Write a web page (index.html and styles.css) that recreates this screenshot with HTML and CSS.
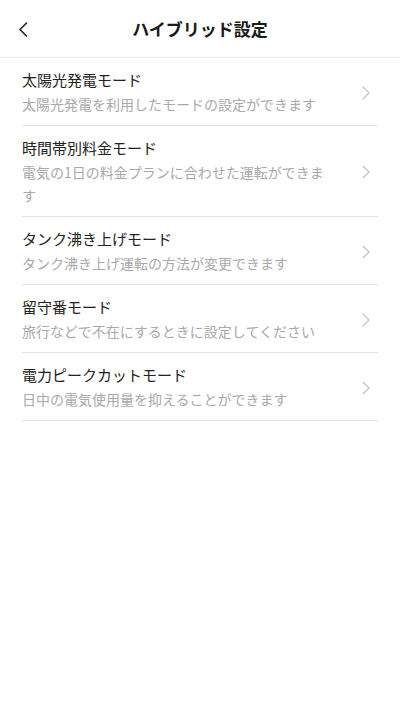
FILE: index.html
```html
<!DOCTYPE html>
<html lang="ja">
<head>
<meta charset="utf-8">
<title>ハイブリッド設定</title>
<link rel="stylesheet" href="styles.css">
</head>
<body>
<header class="header">
  <button class="back" aria-label="戻る">
    <svg width="10" height="15" viewBox="0 0 10 15"><path d="M8.5 1 L2 7.5 L8.5 14" fill="none" stroke="#222" stroke-width="1.6" stroke-linecap="round" stroke-linejoin="round"/></svg>
  </button>
  <h1 class="title">ハイブリッド設定</h1>
</header>
<ul class="list">
  <li class="item">
    <div class="text">
      <div class="item-title">太陽光発電モード</div>
      <div class="item-sub">太陽光発電を利用したモードの設定ができます</div>
    </div>
    <div class="arrow"><svg width="8" height="14" viewBox="0 0 8 14"><path d="M1 1 L7 7 L1 13" fill="none" stroke="#c4c4c4" stroke-width="1.2" stroke-linecap="round" stroke-linejoin="round"/></svg></div>
  </li>
  <li class="item">
    <div class="text">
      <div class="item-title">時間帯別料金モード</div>
      <div class="item-sub">電気の1日の料金プランに合わせた運転ができます</div>
    </div>
    <div class="arrow"><svg width="8" height="14" viewBox="0 0 8 14"><path d="M1 1 L7 7 L1 13" fill="none" stroke="#c4c4c4" stroke-width="1.2" stroke-linecap="round" stroke-linejoin="round"/></svg></div>
  </li>
  <li class="item">
    <div class="text">
      <div class="item-title">タンク沸き上げモード</div>
      <div class="item-sub">タンク沸き上げ運転の方法が変更できます</div>
    </div>
    <div class="arrow"><svg width="8" height="14" viewBox="0 0 8 14"><path d="M1 1 L7 7 L1 13" fill="none" stroke="#c4c4c4" stroke-width="1.2" stroke-linecap="round" stroke-linejoin="round"/></svg></div>
  </li>
  <li class="item">
    <div class="text">
      <div class="item-title">留守番モード</div>
      <div class="item-sub">旅行などで不在にするときに設定してください</div>
    </div>
    <div class="arrow"><svg width="8" height="14" viewBox="0 0 8 14"><path d="M1 1 L7 7 L1 13" fill="none" stroke="#c4c4c4" stroke-width="1.2" stroke-linecap="round" stroke-linejoin="round"/></svg></div>
  </li>
  <li class="item">
    <div class="text">
      <div class="item-title">電力ピークカットモード</div>
      <div class="item-sub">日中の電気使用量を抑えることができます</div>
    </div>
    <div class="arrow"><svg width="8" height="14" viewBox="0 0 8 14"><path d="M1 1 L7 7 L1 13" fill="none" stroke="#c4c4c4" stroke-width="1.2" stroke-linecap="round" stroke-linejoin="round"/></svg></div>
  </li>
</ul>
</body>
</html>
```
FILE: styles.css
```css
* { box-sizing: border-box; }
html, body {
  margin: 0;
  padding: 0;
  background: #fff;
  font-family: "Noto Sans CJK JP", "Noto Sans", sans-serif;
  color: #222;
}
.header {
  height: 58px;
  border-bottom: 1px solid #ececec;
  display: grid;
  grid-template-columns: 60px 1fr 60px;
  align-items: center;
}
.back {
  grid-column: 1;
  grid-row: 1;
  background: none;
  border: 0;
  padding: 0 0 0 18px;
  margin: 0;
  display: flex;
  align-items: center;
  height: 100%;
  justify-self: start;
}
.back svg { display: block; margin-top: 1px; }
.title {
  grid-column: 1 / 4;
  grid-row: 1;
  margin: 0;
  text-align: center;
  font-size: 17px;
  font-weight: 700;
  line-height: 24px;
  color: #1a1a1a;
}
.list {
  list-style: none;
  margin: 0;
  padding: 0 22px;
}
.item {
  display: flex;
  align-items: center;
  padding: 11px 0 9px;
  border-bottom: 1px solid #e2e2e2;
}
.text {
  flex: 1;
  min-width: 0;
}
.item-title {
  font-size: 15px;
  line-height: 22px;
  color: #222;
  margin-bottom: 2px;
}
.item-sub {
  font-size: 14px;
  line-height: 23px;
  color: #a9a9a9;
}
.arrow {
  flex: 0 0 50px;
  display: flex;
  justify-content: flex-end;
  padding-right: 8px;
}
.arrow svg { display: block; }
```
